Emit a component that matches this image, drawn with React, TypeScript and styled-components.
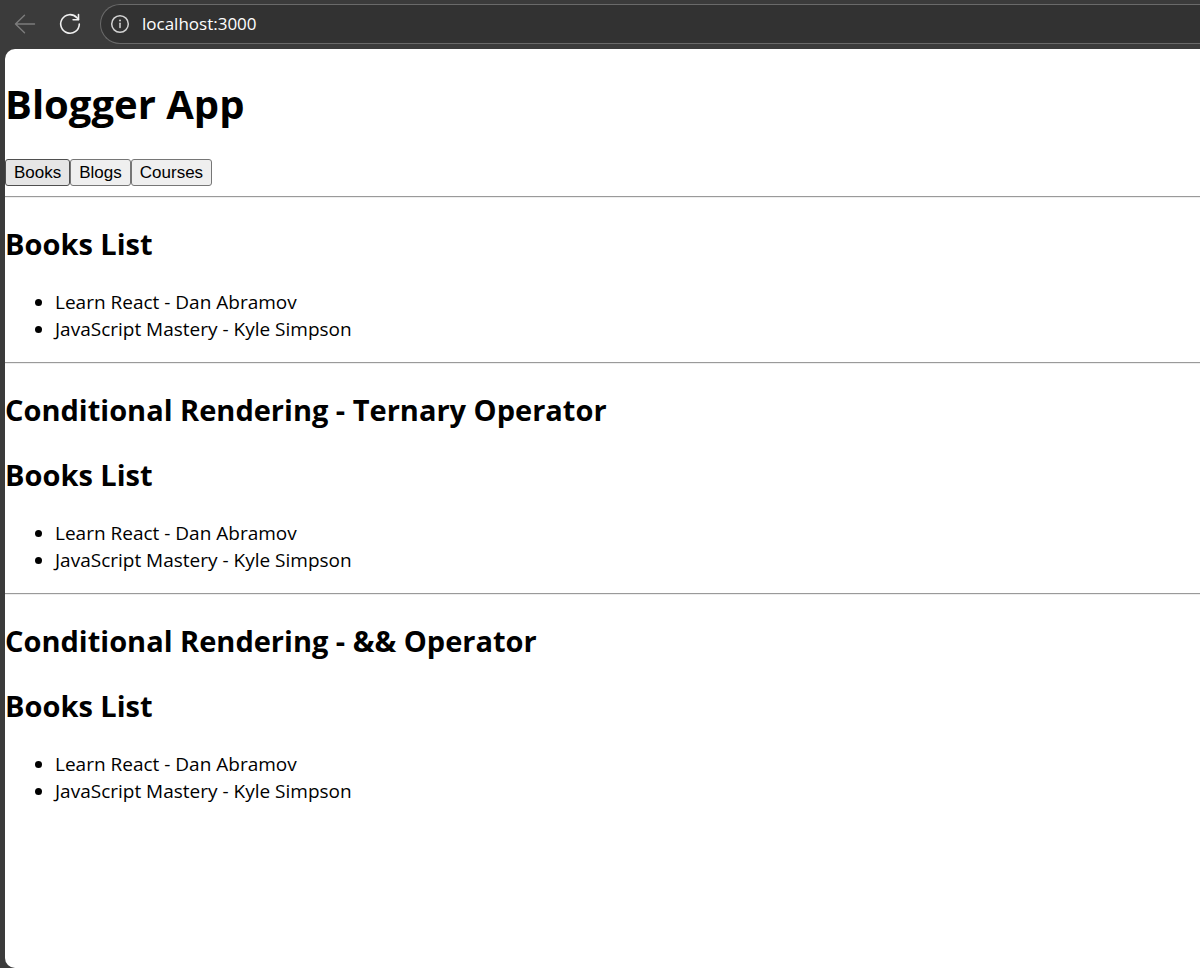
import React, { useState } from "react";
import styled, { createGlobalStyle } from "styled-components";

const GlobalStyle = createGlobalStyle`
  * { box-sizing: border-box; }
  body {
    margin: 0;
    background: #3b3b3b;
    color: #000;
    font-family: "Open Sans", "Noto Sans", sans-serif;
    font-size: 19px;
    line-height: 27px;
  }
`;

const Browser = styled.div`
  display: flex;
  flex-direction: column;
  min-height: 100vh;
  overflow: hidden;
`;

const Toolbar = styled.header`
  display: flex;
  align-items: center;
  height: 49px;
  padding: 4px 0 5px 10px;
`;

const ToolButton = styled.button`
  display: flex;
  align-items: center;
  justify-content: center;
  width: 30px;
  height: 30px;
  margin-right: 15px;
  padding: 0;
  border: 0;
  background: none;
  color: #f0f0f0;
  &:disabled { color: #7c7c7c; }
`;

const AddressBar = styled.label`
  display: flex;
  flex: 1;
  align-items: center;
  gap: 12px;
  height: 40px;
  padding-left: 9px;
  border: 1px solid #6a6a6a;
  border-right: 0;
  border-radius: 20px 0 0 20px;
  background: #323232;
  color: #d2d2d2;
`;

const AddressInput = styled.input`
  flex: 1;
  min-width: 0;
  padding: 0;
  border: 0;
  outline: 0;
  background: none;
  color: #fff;
  font-family: "Open Sans", "Noto Sans", sans-serif;
  font-size: 17px;
  line-height: 24px;
`;

const Page = styled.main`
  flex: 1;
  margin-left: 5px;
  border-radius: 10px 0 0 10px;
  background: #fff;
`;

const Title = styled.h1`
  margin: 0;
  padding: 28px 0;
  font-size: 40px;
  line-height: 54px;
`;

const Heading = styled.h2`
  margin: 25px 0;
  font-size: 29px;
  line-height: 40px;
`;

const Tabs = styled.nav`
  display: flex;
`;

const TabButton = styled.button<{ $active: boolean }>`
  height: 27px;
  padding: 0 8px;
  border: 1px solid ${(p) => (p.$active ? "#4f4f4f" : "#767676")};
  border-radius: 3px;
  background: ${(p) => (p.$active ? "#e5e5e5" : "#efefef")};
  color: #000;
  font-family: "Liberation Sans", Arial, sans-serif;
  font-size: 17px;
  line-height: 20px;
`;

const Divider = styled.hr`
  height: 2px;
  margin: 10px 0 26px;
  border: 0;
  border-top: 1px solid #9a9a9a;
  border-bottom: 1px solid #eee;
`;

const List = styled.ul`
  margin: 25px 0 19px;
  padding-left: 50px;
`;

const tabs = ["Books", "Blogs", "Courses"] as const;
type Tab = (typeof tabs)[number];

const content: Record<Tab, string[]> = {
  Books: ["Learn React - Dan Abramov", "JavaScript Mastery - Kyle Simpson"],
  Blogs: [],
  Courses: [],
};

function ItemList({ tab }: { tab: Tab }) {
  return (
    <>
      <Heading>{tab} List</Heading>
      <List>
        {content[tab].map((item) => (
          <li key={item}>{item}</li>
        ))}
      </List>
    </>
  );
}

function BackIcon() {
  return (
    <svg width="22" height="20" viewBox="0 0 22 20" fill="none" stroke="currentColor" strokeWidth="1.4" strokeLinecap="round" strokeLinejoin="round" aria-hidden="true">
      <path d="M20.5 10H1.5M10.5 1.2L1.5 10l9 8.8" />
    </svg>
  );
}

function ReloadIcon() {
  return (
    <svg width="22" height="22" viewBox="0 0 22 22" fill="none" stroke="currentColor" strokeWidth="1.6" strokeLinecap="round" strokeLinejoin="round" aria-hidden="true">
      <path d="M20.3 11A9.3 9.3 0 1 1 17.8 4.6L19.4 6.5" />
      <path d="M19.5 1.5v5.2h-5.4" />
    </svg>
  );
}

function InfoIcon() {
  return (
    <svg width="20" height="20" viewBox="0 0 20 20" fill="none" stroke="currentColor" strokeWidth="1.5" aria-hidden="true">
      <circle cx="10" cy="10" r="8.3" />
      <path d="M10 9.2v4.3" strokeLinecap="round" />
      <circle cx="10" cy="6.4" r="1" fill="currentColor" stroke="none" />
    </svg>
  );
}

export default function App() {
  const [tab, setTab] = useState<Tab>("Books");
  return (
    <Browser>
      <GlobalStyle />
      <Toolbar>
        <ToolButton aria-label="Back" disabled><BackIcon /></ToolButton>
        <ToolButton aria-label="Reload"><ReloadIcon /></ToolButton>
        <AddressBar>
          <InfoIcon />
          <AddressInput aria-label="Address" defaultValue="localhost:3000" spellCheck={false} />
        </AddressBar>
      </Toolbar>
      <Page>
        <Title>Blogger App</Title>
        <Tabs>
          {tabs.map((name) => (
            <TabButton key={name} $active={name === tab} onClick={() => setTab(name)}>{name}</TabButton>
          ))}
        </Tabs>
        <Divider />
        <ItemList tab={tab} />
        <Divider />
        <Heading>Conditional Rendering - Ternary Operator</Heading>
        <ItemList tab={tab} />
        <Divider />
        <Heading>Conditional Rendering - && Operator</Heading>
        <ItemList tab={tab} />
      </Page>
    </Browser>
  );
}
